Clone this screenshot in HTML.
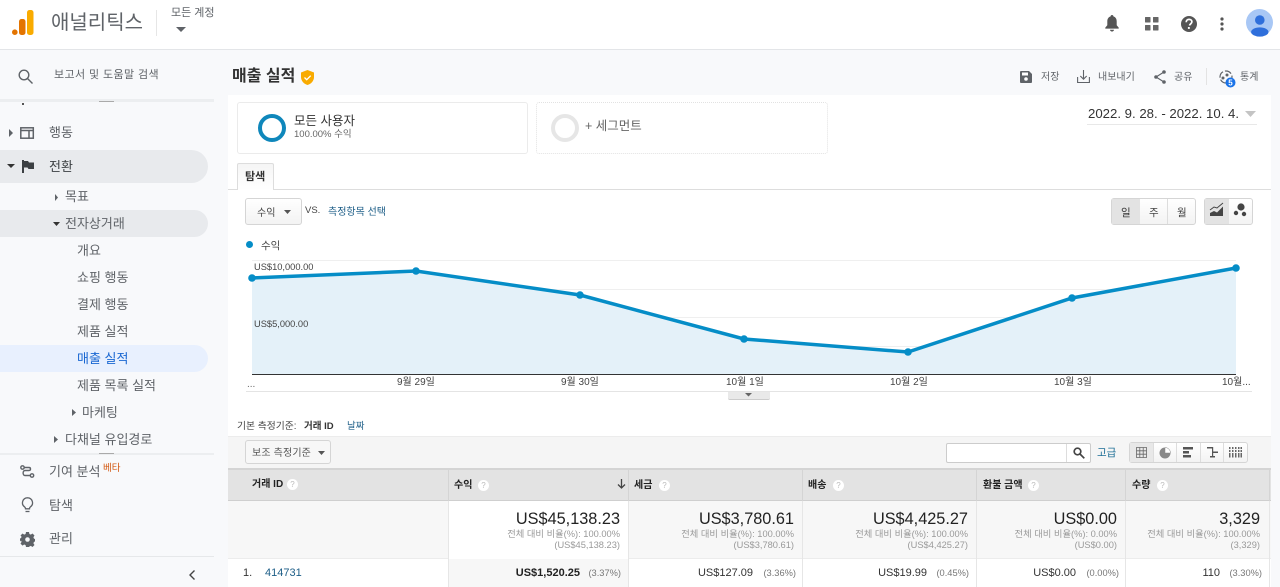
<!DOCTYPE html>
<html lang="ko"><head><meta charset="utf-8"><title>매출 실적</title>
<style>
html,body{margin:0;padding:0}
body{width:1280px;height:587px;overflow:hidden;position:relative;background:#f8f9fb;font-family:"Liberation Sans","Noto Sans CJK KR",sans-serif;color:#5f6368}
.t{position:absolute;white-space:nowrap;line-height:16px;font-size:12px}
.b{position:absolute}
.nav{font-size:13px;color:#5f6368}
.hd{font-size:10px;font-weight:700;color:#222}
.r{text-align:right}
.big{font-size:16.3px;color:#222;line-height:20px}
.sm{font-size:9.3px;color:#999;line-height:14px}
.val{font-size:11px;color:#333}
.pct{font-size:9.3px;color:#777}
.q{position:absolute;width:11px;height:11px;border-radius:50%;background:#fff;color:#bbb;font-size:8px;line-height:11px;text-align:center}
.btn{position:absolute;box-sizing:border-box;border:1px solid #d5d5d5;border-radius:3px;background:linear-gradient(#fff,#f3f3f3)}
svg{position:absolute;overflow:visible}
</style></head><body>

<!-- header -->
<div class="b" style="left:0;top:0;width:1280px;height:49px;background:#fff;border-bottom:1px solid #e3e5e8"></div>
<svg style="left:12px;top:10px" width="22" height="26"><rect x="15" y="0" width="6.500" height="25" rx="2.500" fill="#f9ab00"/><rect x="7" y="9" width="6.500" height="16" rx="2.500" fill="#e37400"/><circle cx="2.800" cy="22.200" r="2.800" fill="#e37400"/></svg>
<div class="t" style="left:51px;top:11px;font-size:20px;line-height:24px;color:#5f6368">애널리틱스</div>
<div class="b" style="left:156px;top:10px;width:1px;height:26px;background:#e6e6e6"></div>
<div class="t" style="left:171px;top:5px;font-size:11px">모든 계정</div>
<svg style="left:176px;top:27px" width="10" height="6"><path d="M0 0h10L5 5z" fill="#5f6368"/></svg>
<!-- header right icons -->
<svg style="left:1104px;top:15px" width="16" height="17"><path d="M8 0c.9 0 1.400.6 1.400 1.400 2.400.7 3.300 2.800 3.300 5.100v3.700l2 2.400v1H1.300v-1l2-2.400V6.500c0-2.300.9-4.400 3.300-5.100C6.600.6 7.100 0 8 0z" fill="#555"/><path d="M6 14.800h4c0 1-.9 1.800-2 1.800s-2-.8-2-1.800z" fill="#555"/></svg>
<svg style="left:1145px;top:17px" width="14" height="14" fill="#666"><rect width="5.500" height="5.500" rx=".5"/><rect x="8" width="5.500" height="5.500" rx=".5"/><rect y="8" width="5.500" height="5.500" rx=".5"/><rect x="8" y="8" width="5.500" height="5.500" rx=".5"/></svg>
<svg style="left:1181px;top:16px" width="16" height="16"><circle cx="8" cy="8" r="8" fill="#555"/><path d="M5.200 6.200c0-1.700 1.200-2.800 2.900-2.800 1.600 0 2.800 1 2.800 2.400 0 2-2.200 2-2.200 3.700" fill="none" stroke="#fff" stroke-width="1.700"/><rect x="6.900" y="11" width="1.900" height="1.900" fill="#fff"/></svg>
<svg style="left:1220px;top:17px" width="4" height="14" fill="#555"><circle cx="2" cy="2" r="1.600"/><circle cx="2" cy="7" r="1.600"/><circle cx="2" cy="12" r="1.600"/></svg>
<svg style="left:1246px;top:9px" width="27" height="27"><circle cx="13.500" cy="13.500" r="13.500" fill="#a8c7f5"/><g fill="#2f6fdb"><circle cx="13.800" cy="11" r="4.800"/><ellipse cx="13.800" cy="23" rx="8.700" ry="4.600"/></g></svg>

<!-- sidebar -->
<svg style="left:18px;top:69px" width="15" height="15" fill="none" stroke="#5f6368" stroke-width="1.400"><circle cx="6" cy="6" r="4.800"/><path d="M9.500 9.500L14.500 14.500"/></svg>
<div class="t" style="left:54px;top:67px;font-size:11px;letter-spacing:.4px">보고서 및 도움말 검색</div>
<div class="b" style="left:0;top:99px;width:214px;height:3px;background:#eceef0"></div>
<div class="b" style="left:22px;top:103px;width:2px;height:2px;background:#555"></div>
<div class="b" style="left:99px;top:101px;width:15px;height:1px;background:#aaa"></div>
<svg style="left:9px;top:129px" width="4" height="8"><path d="M0 0l4 4-4 4z" fill="#5f6368"/></svg>
<svg style="left:20px;top:127px" width="15" height="12" fill="none" stroke="#5f6368" stroke-width="1.500"><rect x=".8" y=".8" width="12.500" height="10.400"/><path d="M1 3.500h12M9 4v7" /></svg>
<div class="t nav" style="left:49px;top:125px">행동</div>

<div class="b" style="left:0;top:150px;width:208px;height:33px;background:#e8eaed;border-radius:0 17px 17px 0"></div>
<svg style="left:7px;top:164px" width="8" height="4"><path d="M0 0h8L4 4z" fill="#333"/></svg>
<svg style="left:22px;top:160px" width="12" height="13"><path d="M0 0h2v13H0zM2 1h4l1 1.500h5V9H6.500l-1-1.500H2z" fill="#3c4043"/></svg>
<div class="t nav" style="left:49px;top:159px;color:#3c4043">전환</div>

<svg style="left:55px;top:194px" width="3" height="7"><path d="M0 0l3 3.500L0 7z" fill="#5f6368"/></svg>
<div class="t nav" style="left:65px;top:189px">목표</div>
<div class="b" style="left:0;top:210px;width:208px;height:27px;background:#e8eaed;border-radius:0 14px 14px 0"></div>
<svg style="left:53px;top:222px" width="7" height="4"><path d="M0 0h7L3.500 4z" fill="#333"/></svg>
<div class="t nav" style="left:65px;top:216px">전자상거래</div>
<div class="t nav" style="left:77px;top:243px">개요</div>
<div class="t nav" style="left:77px;top:270px">쇼핑 행동</div>
<div class="t nav" style="left:77px;top:297px">결제 행동</div>
<div class="t nav" style="left:77px;top:324px">제품 실적</div>
<div class="b" style="left:0;top:345px;width:208px;height:27px;background:#e8f0fe;border-radius:0 14px 14px 0"></div>
<div class="t nav" style="left:77px;top:351px;color:#1967d2">매출 실적</div>
<div class="t nav" style="left:77px;top:378px">제품 목록 실적</div>
<svg style="left:72px;top:409px" width="4" height="7"><path d="M0 0l4 3.500L0 7z" fill="#5f6368"/></svg>
<div class="t nav" style="left:82px;top:405px">마케팅</div>
<svg style="left:54px;top:436px" width="4" height="7"><path d="M0 0l4 3.500L0 7z" fill="#5f6368"/></svg>
<div class="t nav" style="left:65px;top:432px">다채널 유입경로</div>
<div class="b" style="left:0;top:453px;width:214px;height:2px;background:#eceef0"></div>
<div class="b" style="left:99px;top:453px;width:15px;height:1px;background:#aaa"></div>
<svg style="left:20px;top:465px" width="15" height="14" fill="none" stroke="#5f6368" stroke-width="1.400"><circle cx="2.500" cy="2.500" r="1.700"/><circle cx="12" cy="10.500" r="1.700"/><path d="M4.500 2.500H9c2 0 2 3 0 3H5c-2.500 0-2.500 5 0 5h5"/></svg>
<div class="t nav" style="left:49px;top:464px">기여 분석</div>
<div class="t" style="left:103px;top:461px;font-size:9.500px;color:#d2570f">베타</div>
<svg style="left:21px;top:497px" width="13" height="16" fill="none" stroke="#5f6368" stroke-width="1.300"><path d="M6.500 .8a5 5 0 0 0-3 9c.7.6 1 1 1 2h4c0-1 .3-1.400 1-2a5 5 0 0 0-3-9z"/><path d="M4.500 14.500h4"/></svg>
<div class="t nav" style="left:49px;top:498px">탐색</div>
<svg style="left:20px;top:532px" width="15" height="15"><path d="M6 0h3l.4 2 1.400.6L12.500 1.500l2 2L13.400 5.200l.6 1.400 1 .4v2.500l-1 .4-.6 1.400 1.100 1.700-2 2-1.700-1.100-1.400.6L9 15H6l-.4-1.900-1.400-.6-1.700 1.100-2-2 1.100-1.700-.6-1.400L0 9.500V6.500l1-.4.600-1.400L.5 3.500l2-2 1.700 1.100 1.400-.6z" fill="#5f6368"/><circle cx="7.500" cy="7.500" r="2.300" fill="#f8f9fb"/></svg>
<div class="t nav" style="left:49px;top:531px">관리</div>
<div class="b" style="left:0;top:556px;width:214px;height:1px;background:#e6e8ea"></div>
<svg style="left:189px;top:570px" width="7" height="10" fill="none" stroke="#444" stroke-width="1.400"><path d="M5.500 .5L1 5l4.500 4.500"/></svg>

<!-- title bar -->
<div class="t" style="left:232px;top:67px;font-size:16px;line-height:20px;font-weight:700;color:#333">매출 실적</div>
<svg style="left:301px;top:70px" width="13" height="15"><path d="M6.500 0L13 2.500v4.500c0 4-3 7-6.500 8C3 14 0 11 0 7V2.500z" fill="#f9ab00"/><path d="M3.500 7.500l2.200 2.200 4-4" fill="none" stroke="#fff" stroke-width="1.300"/></svg>
<svg style="left:1020px;top:71px" width="12" height="12"><path d="M0 1a1 1 0 0 1 1-1h8l3 3v8a1 1 0 0 1-1 1H1a1 1 0 0 1-1-1z" fill="#5f6368"/><rect x="2" y="1.500" width="6" height="3" fill="#fff"/><circle cx="6" cy="8" r="1.800" fill="#fff"/></svg>
<div class="t" style="left:1041px;top:70px;font-size:10px">저장</div>
<svg style="left:1077px;top:70px" width="13" height="14" fill="none" stroke="#5f6368" stroke-width="1.100"><path d="M6.500 0v9M3.300 6l3.200 3.200L9.700 6M.6 7v5.500h11.800V7"/></svg>
<div class="t" style="left:1098px;top:70px;font-size:10px">내보내기</div>
<svg style="left:1154px;top:70px" width="12" height="14"><path d="M10 2L2 7l8 5" fill="none" stroke="#5f6368" stroke-width="1.100"/><circle cx="10" cy="2" r="1.800" fill="#5f6368"/><circle cx="2" cy="7" r="1.800" fill="#5f6368"/><circle cx="10" cy="12" r="1.800" fill="#5f6368"/></svg>
<div class="t" style="left:1174px;top:70px;font-size:10px">공유</div>
<div class="b" style="left:1206px;top:68px;width:1px;height:17px;background:#e3e3e3"></div>
<svg style="left:1219px;top:70px" width="18" height="18"><circle cx="7" cy="7" r="6" fill="none" stroke="#5f6368" stroke-width="1.200" stroke-dasharray="7 2"/><circle cx="4" cy="8" r="1.500" fill="#5f6368"/><circle cx="8" cy="5" r="1.500" fill="#5f6368"/><circle cx="11.500" cy="12.500" r="5" fill="#1a73e8"/><text x="11.500" y="15.500" font-size="8" font-weight="700" fill="#fff" text-anchor="middle" font-family="Liberation Sans">5</text></svg>
<div class="t" style="left:1240px;top:70px;font-size:10px">통계</div>

<!-- main panel -->
<div class="b" style="left:228px;top:95px;width:1043px;height:492px;background:#fff"></div>

<!-- segments -->
<div class="b" style="left:237px;top:102px;width:291px;height:52px;box-sizing:border-box;border:1px solid #ebebeb;border-radius:3px;background:#fff"></div>
<div class="b" style="left:258px;top:114px;width:28px;height:28px;box-sizing:border-box;border:4px solid #0f87bb;border-radius:50%"></div>
<div class="t" style="left:294px;top:113px;font-size:12.500px;color:#333">모든 사용자</div>
<div class="t" style="left:294px;top:127px;font-size:9.500px;color:#666">100.00% 수익</div>
<div class="b" style="left:536px;top:102px;width:292px;height:52px;box-sizing:border-box;border:1px dotted #e2e2e2;border-radius:3px"></div>
<div class="b" style="left:551px;top:114px;width:28px;height:28px;box-sizing:border-box;border:4px solid #e6e6e6;border-radius:50%"></div>
<div class="t" style="left:585px;top:118px;font-size:12.500px;color:#666">+ 세그먼트</div>
<div class="t" style="left:1088px;top:105px;font-size:13.200px;color:#333;line-height:18px">2022. 9. 28. - 2022. 10. 4.</div>
<svg style="left:1245px;top:111px" width="11" height="6"><path d="M0 0h11L5.500 6z" fill="#c4c4c4"/></svg>
<div class="b" style="left:1087px;top:124px;width:170px;height:1px;background:#e8e8e8"></div>

<!-- tab -->
<div class="b" style="left:228px;top:189px;width:1043px;height:1px;background:#ddd"></div>
<div class="b" style="left:237px;top:163px;width:37px;height:27px;box-sizing:border-box;border:1px solid #ddd;border-bottom:0;border-radius:2px 2px 0 0;background:linear-gradient(#f5f5f5,#fff)"></div>
<div class="t" style="left:245px;top:169px;font-size:11px;font-weight:700;color:#333">탐색</div>

<!-- metric controls -->
<div class="btn" style="left:245px;top:198px;width:57px;height:27px"></div>
<div class="t" style="left:257px;top:206px;font-size:10px;color:#444">수익</div>
<svg style="left:284px;top:210px" width="7" height="4"><path d="M0 0h7L3.500 4z" fill="#555"/></svg>
<div class="t" style="left:305px;top:203px;font-size:9.500px;color:#444">VS.</div>
<div class="t" style="left:328px;top:205px;font-size:10px;color:#1c5d87">측정항목 선택</div>

<!-- day/week/month -->
<div class="btn" style="left:1111px;top:198px;width:85px;height:27px"></div>
<div class="b" style="left:1112px;top:199px;width:28px;height:25px;background:#e3e3e3"></div>
<div class="b" style="left:1167px;top:199px;width:1px;height:25px;background:#ddd"></div>
<div class="t" style="left:1121px;top:205px;font-size:10.500px;color:#333">일</div>
<div class="t" style="left:1149px;top:205px;font-size:10.500px;color:#444">주</div>
<div class="t" style="left:1177px;top:205px;font-size:10.500px;color:#444">월</div>
<div class="btn" style="left:1204px;top:198px;width:49px;height:27px"></div>
<div class="b" style="left:1205px;top:199px;width:24px;height:25px;background:#e3e3e3"></div>
<svg style="left:1210px;top:203px" width="14" height="14"><path d="M0 13v-3l4-2 3 1.500 6-6V13z" fill="#444"/><path d="M0 7l4-3 3 1 6-5" fill="none" stroke="#444" stroke-width="1"/></svg>
<svg style="left:1233px;top:203px" width="16" height="16" fill="#444"><circle cx="8" cy="4" r="3.600"/><circle cx="3" cy="10" r="2.200"/><circle cx="11" cy="11" r="2.200"/></svg>

<!-- legend -->
<div class="b" style="left:246px;top:241px;width:7px;height:7px;border-radius:50%;background:#058dc7"></div>
<div class="t" style="left:261px;top:238px;font-size:10.500px;color:#444">수익</div>

<!-- chart -->
<svg style="left:0;top:0" width="1280" height="587">
<g stroke="#efefef" stroke-width="1"><path d="M252 260.500H1236M252 289.500H1236M252 317.500H1236M252 346.500H1236"/></g>
<path d="M252 278L416 271L580 295L744 339L908 352L1072 298L1236 268V374H252Z" fill="#e4f1f9"/>
<path d="M252 374.500H1236" stroke="#333" stroke-width="1"/>
<path d="M246 391.500H1252" stroke="#e4e4e4" stroke-width="1"/>
<path d="M252 278L416 271L580 295L744 339L908 352L1072 298L1236 268" fill="none" stroke="#058dc7" stroke-width="3.500"/>
<g fill="#058dc7"><circle cx="252" cy="278" r="3.800"/><circle cx="416" cy="271" r="3.800"/><circle cx="580" cy="295" r="3.800"/><circle cx="744" cy="339" r="3.800"/><circle cx="908" cy="352" r="3.800"/><circle cx="1072" cy="298" r="3.800"/><circle cx="1236" cy="268" r="3.800"/></g>
</svg>
<div class="t" style="left:254px;top:259px;font-size:9.300px;color:#444">US$10,000.00</div>
<div class="t" style="left:254px;top:316px;font-size:9.300px;color:#444">US$5,000.00</div>
<div class="t" style="left:247px;top:377px;font-size:10px;color:#666">...</div>
<div class="t" style="left:397px;top:375px;font-size:10px;color:#444">9월 29일</div>
<div class="t" style="left:561px;top:375px;font-size:10px;color:#444">9월 30일</div>
<div class="t" style="left:726px;top:375px;font-size:10px;color:#444">10월 1일</div>
<div class="t" style="left:890px;top:375px;font-size:10px;color:#444">10월 2일</div>
<div class="t" style="left:1054px;top:375px;font-size:10px;color:#444">10월 3일</div>
<div class="t" style="left:1222px;top:375px;font-size:10px;color:#444">10월...</div>
<div class="b" style="left:728px;top:392px;width:42px;height:7px;background:#e9e9e9;border-radius:0 0 2px 2px;border-bottom:1px solid #ccc"></div>
<svg style="left:745px;top:393px" width="7" height="4"><path d="M0 0h7L3.500 3.500z" fill="#666"/></svg>

<!-- primary dimension -->
<div class="t" style="left:237px;top:419px;font-size:9.800px;color:#444">기본 측정기준:</div>
<div class="t" style="left:304px;top:419px;font-size:9.500px;font-weight:700;color:#333">거래 ID</div>
<div class="t" style="left:347px;top:419px;font-size:9.500px;color:#1c5d87">날짜</div>

<!-- toolbar -->
<div class="b" style="left:228px;top:436px;width:1043px;height:32px;background:#f5f5f5;border-top:1px solid #ececec;box-sizing:border-box"></div>
<div class="btn" style="left:245px;top:440px;width:86px;height:24px;background:#f7f7f7"></div>
<div class="t" style="left:252px;top:446px;font-size:10px;color:#555;letter-spacing:.15px">보조 측정기준</div>
<svg style="left:318px;top:451px" width="7" height="4"><path d="M0 0h7L3.500 4z" fill="#555"/></svg>
<div class="b" style="left:946px;top:443px;width:145px;height:20px;box-sizing:border-box;border:1px solid #ccc;border-radius:2px;background:#fff"></div>
<div class="b" style="left:1066px;top:444px;width:1px;height:18px;background:#ddd"></div>
<svg style="left:1073px;top:447px" width="12" height="12" fill="none" stroke="#444" stroke-width="1.700"><circle cx="4.500" cy="4.500" r="3.300"/><path d="M7 7l4.300 4.300"/></svg>
<div class="t" style="left:1097px;top:445px;font-size:10.500px;color:#1c6e96">고급</div>
<div class="btn" style="left:1129px;top:442px;width:119px;height:21px"></div>
<div class="b" style="left:1130px;top:443px;width:23px;height:19px;background:#e8e8e8"></div>
<div class="b" style="left:1176px;top:443px;width:1px;height:19px;background:#ddd"></div>
<div class="b" style="left:1200px;top:443px;width:1px;height:19px;background:#ddd"></div>
<div class="b" style="left:1223px;top:443px;width:1px;height:19px;background:#ddd"></div>
<div class="b" style="left:1153px;top:443px;width:1px;height:19px;background:#ddd"></div>
<svg style="left:1136px;top:447px" width="11" height="11" fill="none" stroke="#666" stroke-width=".8"><path d="M.5.500h10v10H.5zM.5 3.800h10M.5 7.200h10M3.800.5v10M7.200.5v10"/></svg>
<svg style="left:1159px;top:447px" width="12" height="12"><circle cx="6" cy="6" r="5.500" fill="#888"/><path d="M6 6V.5A5.500 5.500 0 0 1 11.500 6z" fill="#fff" stroke="#888" stroke-width=".5"/></svg>
<svg style="left:1183px;top:447px" width="11" height="11" fill="#555"><rect width="10" height="2.500"/><rect y="4" width="6" height="2.500"/><rect y="8" width="8" height="2.500"/></svg>
<svg style="left:1207px;top:447px" width="11" height="11" fill="#555"><rect x="0" width="6" height="1.500"/><rect x="5" y="4.500" width="6" height="1.500"/><rect x="3" y="9" width="5" height="1.500"/><rect x="5" width="1.200" height="10"/></svg>
<svg style="left:1229px;top:447px" width="13" height="11" fill="#666"><rect width="1.500" height="10.500"/><rect x="3" width="1.500" height="10.500"/><rect x="6" width="1.500" height="10.500"/><rect x="9" width="1.500" height="10.500"/><rect x="11.500" width="1.500" height="10.500"/><rect y="2" width="13" height="1" fill="#f5f5f5"/><rect y="5" width="13" height="1" fill="#f5f5f5"/></svg>

<!-- table backgrounds -->
<div class="b" style="left:228px;top:468px;width:1043px;height:33px;background:#e3e3e3;border-top:2px solid #d4d4d4;border-bottom:1px solid #cfcfcf;box-sizing:border-box"></div>
<div class="b" style="left:228px;top:501px;width:1043px;height:58px;background:#f7f7f7;border-bottom:1px solid #ececec;box-sizing:border-box"></div>
<div class="b" style="left:449px;top:501px;width:179px;height:58px;background:#fff"></div>
<div class="b" style="left:449px;top:559px;width:179px;height:28px;background:#f7f7f7"></div>
<div class="b" style="left:448px;top:468px;width:1px;height:33px;background:#d4d4d4"></div>
<div class="b" style="left:628px;top:468px;width:1px;height:33px;background:#d4d4d4"></div>
<div class="b" style="left:802px;top:468px;width:1px;height:33px;background:#d4d4d4"></div>
<div class="b" style="left:976px;top:468px;width:1px;height:33px;background:#d4d4d4"></div>
<div class="b" style="left:1125px;top:468px;width:1px;height:33px;background:#d4d4d4"></div>
<div class="b" style="left:1269px;top:468px;width:1px;height:33px;background:#d4d4d4"></div>
<div class="b" style="left:448px;top:501px;width:1px;height:86px;background:#e6e6e6"></div>
<div class="b" style="left:628px;top:501px;width:1px;height:86px;background:#e6e6e6"></div>
<div class="b" style="left:802px;top:501px;width:1px;height:86px;background:#e6e6e6"></div>
<div class="b" style="left:976px;top:501px;width:1px;height:86px;background:#e6e6e6"></div>
<div class="b" style="left:1125px;top:501px;width:1px;height:86px;background:#e6e6e6"></div>
<div class="b" style="left:1269px;top:501px;width:1px;height:86px;background:#e6e6e6"></div>

<!-- table headers -->
<div class="t hd" style="left:252px;top:477px">거래 ID</div><div class="q" style="left:287px;top:479px">?</div>
<div class="t hd" style="left:454px;top:478px">수익</div><div class="q" style="left:478px;top:480px">?</div>
<svg style="left:617px;top:479px" width="9" height="10" fill="none" stroke="#444" stroke-width="1.300"><path d="M4.500 0v9M1 5.500L4.500 9 8 5.500"/></svg>
<div class="t hd" style="left:634px;top:478px">세금</div><div class="q" style="left:659px;top:480px">?</div>
<div class="t hd" style="left:808px;top:478px">배송</div><div class="q" style="left:833px;top:480px">?</div>
<div class="t hd" style="left:983px;top:478px">환불 금액</div><div class="q" style="left:1028px;top:480px">?</div>
<div class="t hd" style="left:1132px;top:478px">수량</div><div class="q" style="left:1157px;top:480px">?</div>

<!-- totals -->
<div class="t r big" style="right:660px;top:509px">US$45,138.23</div>
<div class="t r sm" style="right:660px;top:527px">전체 대비 비율(%): 100.00%</div>
<div class="t r sm" style="right:660px;top:538px">(US$45,138.23)</div>
<div class="t r big" style="right:486px;top:509px">US$3,780.61</div>
<div class="t r sm" style="right:486px;top:527px">전체 대비 비율(%): 100.00%</div>
<div class="t r sm" style="right:486px;top:538px">(US$3,780.61)</div>
<div class="t r big" style="right:312px;top:509px">US$4,425.27</div>
<div class="t r sm" style="right:312px;top:527px">전체 대비 비율(%): 100.00%</div>
<div class="t r sm" style="right:312px;top:538px">(US$4,425.27)</div>
<div class="t r big" style="right:163px;top:509px">US$0.00</div>
<div class="t r sm" style="right:163px;top:527px">전체 대비 비율(%): 0.00%</div>
<div class="t r sm" style="right:163px;top:538px">(US$0.00)</div>
<div class="t r big" style="right:20px;top:509px">3,329</div>
<div class="t r sm" style="right:20px;top:527px">전체 대비 비율(%): 100.00%</div>
<div class="t r sm" style="right:20px;top:538px">(3,329)</div>

<!-- row 1 -->
<div class="t val" style="left:243px;top:565px">1.</div>
<div class="t val" style="left:265px;top:565px;color:#1c5d87">414731</div>
<div class="t val r" style="right:700px;top:565px;font-weight:700;color:#222">US$1,520.25</div>
<div class="t pct r" style="right:659px;top:565px">(3.37%)</div>
<div class="t val r" style="right:527px;top:565px">US$127.09</div>
<div class="t pct r" style="right:484px;top:565px">(3.36%)</div>
<div class="t val r" style="right:353px;top:565px">US$19.99</div>
<div class="t pct r" style="right:311px;top:565px">(0.45%)</div>
<div class="t val r" style="right:204px;top:565px">US$0.00</div>
<div class="t pct r" style="right:161px;top:565px">(0.00%)</div>
<div class="t val r" style="right:60px;top:565px">110</div>
<div class="t pct r" style="right:18px;top:565px">(3.30%)</div>
</body></html>
